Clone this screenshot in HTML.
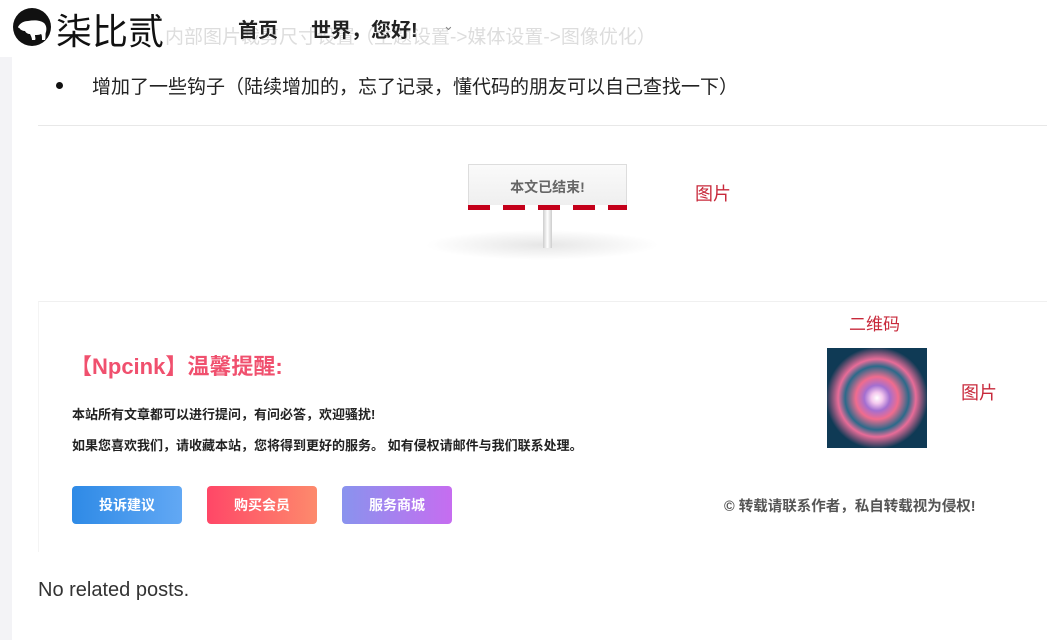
<!DOCTYPE html>
<html><head><meta charset="utf-8"><style>
body{margin:0;width:1047px;height:640px;overflow:hidden;background:#fff;font-family:"Liberation Sans","Noto Sans CJK SC",sans-serif;position:relative}
.a{position:absolute;white-space:nowrap}
.btn{position:absolute;top:486px;width:110px;height:38px;border-radius:4px;color:#fff;font-size:14px;font-weight:bold;text-align:center;line-height:38px}
</style></head><body>
<div class="a" style="left:0;top:57px;width:12px;height:583px;background:#f3f3f6"></div>
<div class="a" style="left:165px;top:22px;font-size:19px;color:#ddd">内部图片裁剪尺寸设置（主题设置->媒体设置->图像优化）</div>
<svg class="a" style="left:12px;top:7px" width="40" height="40" viewBox="0 0 40 40"><circle cx="20" cy="20" r="19" fill="#111"/><path d="M6 20c2-4 6-6 10-6 6-1 12-1 16 2 2 2 3 5 2 9-1 2 0 5-1 8h-3c0-3 0-5-1-6-2 1-4 1-6 1 0 2 1 4 0 5h-3c0-2-1-4-2-6-2 0-4-1-5-3-2 0-4-1-5-2 0-1-2-1-2-2z" fill="#fff"/></svg>
<div class="a" style="left:56px;top:3px;font-size:36px;color:#111">柒比贰</div>
<div class="a" style="left:238px;top:14px;font-size:20px;font-weight:bold;color:#222">首页</div>
<div class="a" style="left:311px;top:14px;font-size:20px;font-weight:bold;color:#222">世界，您好!</div>
<div class="a" style="left:443px;top:18px;font-size:13px;color:#888">⌄</div>
<div class="a" style="left:56px;top:82px;width:7px;height:7px;border-radius:50%;background:#111"></div>
<div class="a" style="left:92px;top:72px;font-size:19px;color:#222">增加了一些钩子（陆续增加的，忘了记录，懂代码的朋友可以自己查找一下）</div>
<div class="a" style="left:38px;top:125px;width:1009px;height:1px;background:#e8e8e8"></div>
<div class="a" style="left:425px;top:230px;width:235px;height:30px;border-radius:50%;background:radial-gradient(ellipse,#e6e6e6,rgba(255,255,255,0) 70%)"></div>
<div class="a" style="left:543px;top:205px;width:9px;height:43px;background:linear-gradient(90deg,#ccc,#fff,#ccc)"></div>
<div class="a" style="left:468px;top:164px;width:159px;height:46px;background:linear-gradient(#fafafa,#eee);border:1px solid #ddd;box-sizing:border-box;text-align:center;font-size:14px;font-weight:bold;color:#666;line-height:44px">本文已结束!</div>
<div class="a" style="left:468px;top:205px;width:159px;height:5px;background:repeating-linear-gradient(90deg,#c4001a 0 22px,#fff 22px 35px)"></div>
<div class="a" style="left:695px;top:180px;font-size:18px;color:#c8293b">图片</div>
<div class="a" style="left:38px;top:301px;width:1009px;height:250px;border-top:1px solid #f0f0f0;border-left:1px solid #f4f4f4;background:#fff"></div>
<div class="a" style="left:849px;top:310px;font-size:17px;color:#c8293b">二维码</div>
<div class="a" style="left:827px;top:348px;width:100px;height:100px;background:radial-gradient(circle at 50% 50%,#fff 0,#f4c8ee 8%,#a36fd0 18%,#f06c8e 30%,#2b6a8a 45%,#e86c98 55%,#0f3a55 72%)"></div>
<div class="a" style="left:961px;top:379px;font-size:18px;color:#c8293b">图片</div>
<div class="a" style="left:70px;top:349px;font-size:22px;font-weight:bold;color:#f0506e">【Npcink】温馨提醒:</div>
<div class="a" style="left:72px;top:404px;font-size:13px;font-weight:bold;color:#222">本站所有文章都可以进行提问，有问必答，欢迎骚扰!</div>
<div class="a" style="left:72px;top:435px;font-size:13px;font-weight:bold;color:#222">如果您喜欢我们，请收藏本站，您将得到更好的服务。 如有侵权请邮件与我们联系处理。</div>
<div class="btn" style="left:72px;background:linear-gradient(90deg,#2e8ae6,#62a8f4)">投诉建议</div>
<div class="btn" style="left:207px;background:linear-gradient(90deg,#ff4767,#fd8a6c)">购买会员</div>
<div class="btn" style="left:342px;background:linear-gradient(90deg,#8993ee,#c66df0)">服务商城</div>
<div class="a" style="left:724px;top:495px;font-size:14.5px;font-weight:bold;color:#555">© 转载请联系作者，私自转载视为侵权!</div>
<div class="a" style="left:38px;top:579px;font-size:20px;color:#333">No related posts.</div>
</body></html>
